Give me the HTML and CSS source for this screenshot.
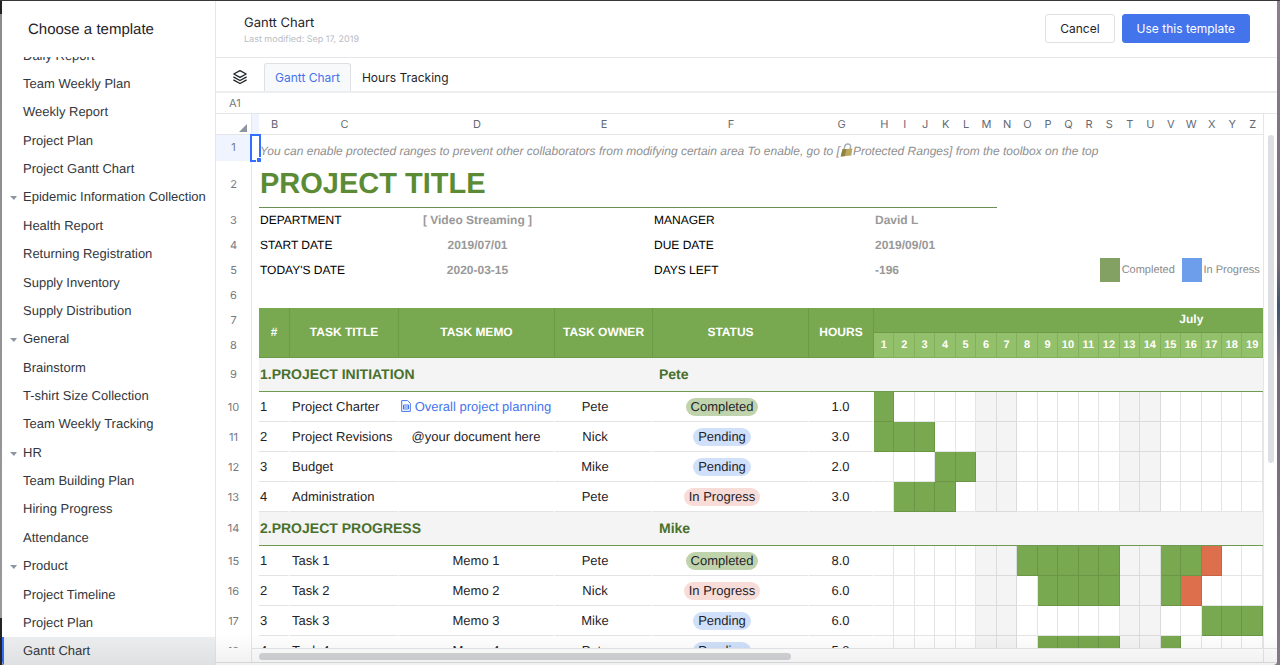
FILE: index.html
```
<!DOCTYPE html>
<html lang="en">
<head>
    <meta charset="UTF-8">
    <meta name="viewport" content="width=device-width, initial-scale=1.0">
    <title>Choose a template</title>
    <link rel="stylesheet" href="styles.css">
</head>
<body>
    <div class="modal">
        <!-- Template list -->
        <aside class="sidebar">
            <h1 class="sidebar-title">Choose a template</h1>
            <nav class="list-window">
                <ul class="template-list">
                    <li><a href="#">Daily Report</a></li>
                    <li><a href="#">Team Weekly Plan</a></li>
                    <li><a href="#">Weekly Report</a></li>
                    <li><a href="#">Project Plan</a></li>
                    <li><a href="#">Project Gantt Chart</a></li>
                    <li><button type="button" class="group">Epidemic Information Collection</button></li>
                    <li><a href="#">Health Report</a></li>
                    <li><a href="#">Returning Registration</a></li>
                    <li><a href="#">Supply Inventory</a></li>
                    <li><a href="#">Supply Distribution</a></li>
                    <li><button type="button" class="group">General</button></li>
                    <li><a href="#">Brainstorm</a></li>
                    <li><a href="#">T-shirt Size Collection</a></li>
                    <li><a href="#">Team Weekly Tracking</a></li>
                    <li><button type="button" class="group">HR</button></li>
                    <li><a href="#">Team Building Plan</a></li>
                    <li><a href="#">Hiring Progress</a></li>
                    <li><a href="#">Attendance</a></li>
                    <li><button type="button" class="group">Product</button></li>
                    <li><a href="#">Project Timeline</a></li>
                    <li><a href="#">Project Plan</a></li>
                    <li><a href="#" class="selected">Gantt Chart</a></li>
                </ul>
            </nav>
        </aside>

        <!-- Preview -->
        <main class="preview">
            <header class="preview-header">
                <div>
                    <h2 class="doc-title">Gantt Chart</h2>
                    <p class="doc-date">Last modified: Sep 17, 2019</p>
                </div>
                <div class="actions">
                    <button type="button" class="btn">Cancel</button>
                    <button type="button" class="btn btn-primary">Use this template</button>
                </div>
            </header>

            <div class="tabs">
                <button type="button" class="layers" aria-label="All sheets">
                    <svg width="16" height="16" viewBox="0 0 16 16" fill="none" stroke="#1f2329" stroke-width="1.3" stroke-linejoin="round" stroke-linecap="round">
                        <path d="M8 1.6 14.2 5 8 8.4 1.8 5Z"/>
                        <path d="M1.8 8.1 8 11.5l6.2-3.4"/>
                        <path d="M1.8 11.1 8 14.5l6.2-3.4"/>
                    </svg>
                </button>
                <button type="button" class="tab active">Gantt Chart</button>
                <button type="button" class="tab">Hours Tracking</button>
            </div>

            <div class="cell-ref">A1</div>

            <div class="sheet-area">
                <div class="sheet-window">
                    <table class="sheet">
                        <colgroup>
                            <col class="w-head"><col class="w-a"><col class="w-b"><col class="w-c"><col class="w-d"><col class="w-e"><col class="w-f"><col class="w-g">
                            <col span="19">
                        </colgroup>
                        <thead>
                            <tr id="letters">
                                <th class="corner"><svg width="8" height="8" viewBox="0 0 8 8"><path d="M8 0V8H0Z" fill="#8f959e"/></svg></th>
                            </tr>
                        </thead>
                        <tbody id="rows">
                            <tr class="row-note">
                                <th class="num current">1</th>
                                <td class="cell-a"><span class="selection"></span></td>
                                <td colspan="25" class="note">You can enable protected ranges to prevent other collaborators from modifying certain area To enable, go to [<svg class="lock" width="13" height="14" viewBox="1 0 12 14"><path d="M4.5 6.5 5.2 3.6C5.8 1.3 7.2.8 8.7 1c1.7.2 2.7 1.6 2.3 3.4L10.5 6.5" fill="none" stroke="#a5afb8" stroke-width="1.5"/><path d="M3 6.2 12.9 5.6 11.8 12.6 1.2 13.6Z" fill="#b9a95c"/><path d="M3 6.2 7 5.9 5.2 13.2 1.2 13.6Z" fill="#8d8345"/></svg>Protected Ranges] from the toolbox on the top</td>
                            </tr>
                            <tr class="row-title">
                                <th class="num">2</th>
                                <td></td>
                                <td colspan="12" class="project-title">PROJECT TITLE</td>
                                <td colspan="13"></td>
                            </tr>
                            <tr>
                                <th class="num">3</th>
                                <td></td>
                                <td colspan="2" class="label">DEPARTMENT</td>
                                <td class="value center">[ Video Streaming ]</td>
                                <td></td>
                                <td colspan="2" class="label">MANAGER</td>
                                <td colspan="19" class="value">David L</td>
                            </tr>
                            <tr>
                                <th class="num">4</th>
                                <td></td>
                                <td colspan="2" class="label">START DATE</td>
                                <td class="value center">2019/07/01</td>
                                <td></td>
                                <td colspan="2" class="label">DUE DATE</td>
                                <td colspan="19" class="value">2019/09/01</td>
                            </tr>
                            <tr>
                                <th class="num">5</th>
                                <td></td>
                                <td colspan="2" class="label">TODAY'S DATE</td>
                                <td class="value center">2020-03-15</td>
                                <td></td>
                                <td colspan="2" class="label">DAYS LEFT</td>
                                <td colspan="11" class="value">-196</td>
                                <td class="swatch swatch-done"></td>
                                <td colspan="3" class="legend">Completed</td>
                                <td class="swatch swatch-progress"></td>
                                <td colspan="3" class="legend">In Progress</td>
                            </tr>
                            <tr>
                                <th class="num">6</th>
                                <td colspan="26"></td>
                            </tr>
                            <tr>
                                <th class="num">7</th>
                                <td></td>
                                <th rowspan="2" class="head">#</th>
                                <th rowspan="2" class="head">TASK TITLE</th>
                                <th rowspan="2" class="head">TASK MEMO</th>
                                <th rowspan="2" class="head">TASK OWNER</th>
                                <th rowspan="2" class="head">STATUS</th>
                                <th rowspan="2" class="head">HOURS</th>
                                <td colspan="12" class="month"></td>
                                <th colspan="7" class="month">July</th>
                            </tr>
                            <tr id="days">
                                <th class="num">8</th>
                                <td></td>
                            </tr>
                        </tbody>
                    </table>
                </div>
                <div class="v-scroll"><div class="v-thumb"></div></div>
                <div class="h-scroll"><div class="h-thumb"></div></div>
                <div class="scroll-corner"></div>
            </div>
        </main>
        <div class="fade"></div>
    </div>

    <script src="script.js"></script>
</body>
</html>
```

FILE: styles.css
```
* {
    box-sizing: border-box;
}
body {
    margin: 0;
    height: 100vh;
    padding: 1px 3px 0 2px;
    overflow: hidden;
    font-family: Inter, "Liberation Sans", sans-serif;
    font-size: 12px;
    text-rendering: geometricPrecision;
    color: #1f2329;
    background:
        linear-gradient(#39363c, #39363c) top / 100% 1px no-repeat,
        linear-gradient(#222 14px, #8b8b8d 14px, #9a9a9c 618px, #222 618px) left / 2px 100% no-repeat,
        linear-gradient(#8f7f8d, #75687a 40%, #3f5470 46%, #75687a 54%, #857888);
}
button {
    font: inherit;
    color: inherit;
    border: none;
    background: none;
    padding: 0;
    cursor: pointer;
}
h1, h2, p, ul {
    margin: 0;
    padding: 0;
    font-weight: normal;
}
.modal {
    position: relative;
    display: flex;
    height: 100%;
    overflow: hidden;
    background: #fff;
    border-radius: 0 0 4px 4px;
}

/* Sidebar */
.sidebar {
    display: flex;
    flex-direction: column;
    flex: 0 0 214px;
    min-width: 0;
    border-right: 1px solid #e4e6e9;
    font-family: "Liberation Sans", Arial, sans-serif;
    font-size: 13px;
}
.sidebar-title {
    flex: none;
    height: 56px;
    padding-left: 26px;
    font-size: 15px;
    line-height: 58px;
}
.list-window {
    flex: 1;
    min-height: 0;
    overflow: hidden;
}
.template-list {
    display: flex;
    flex-direction: column;
    height: calc(100% + 16px);
    margin-top: -16px;
    list-style: none;
}
.template-list li {
    display: flex;
    flex: 1;
}
.template-list a, .group {
    display: flex;
    align-items: center;
    width: 100%;
    padding-left: 21px;
    color: #33373d;
    text-decoration: none;
    white-space: nowrap;
}
.group {
    padding-left: 8px;
}
.group::before {
    content: "";
    margin: 3px 6px 0 0;
    border: solid transparent;
    border-width: 4px 3px 0 4px;
    border-top-color: #8f959e;
}
.template-list .selected {
    padding-left: 19px;
    border-left: 2px solid #3370ff;
    background: #eceef0;
}

/* Preview header */
.preview {
    display: flex;
    flex: 1;
    flex-direction: column;
    min-width: 0;
    padding-bottom: 2px;
}
.preview-header {
    display: flex;
    justify-content: space-between;
    align-items: flex-start;
    height: 57px;
    padding: 13px 27px 0 28px;
    border-bottom: 1px solid #e4e6e9;
}
.doc-title {
    font-size: 13px;
    line-height: 18px;
}
.doc-date {
    margin-top: 2px;
    font-size: 9px;
    line-height: 12px;
    color: #b9bdc3;
}
.actions {
    display: flex;
    gap: 7px;
}
.btn {
    height: 29px;
    padding: 0 14px;
    border: 1px solid #dee0e3;
    border-radius: 3px;
}
.btn-primary {
    border-color: #4474ec;
    background: #4474ec;
    color: #fff;
}

/* Sheet tabs */
.tabs {
    display: flex;
    align-items: flex-end;
    height: 35px;
    border-bottom: 2px solid #eceef0;
}
.layers {
    width: 48px;
    height: 28px;
}
.layers svg {
    display: block;
    margin: 0 auto;
}
.tab {
    height: 28px;
    padding: 0 10px;
    border: 1px solid transparent;
    border-bottom: none;
    border-radius: 3px 3px 0 0;
}
.tab.active {
    border-color: #dee0e3;
    background: #f8f9fa;
    color: #4474ec;
}
.cell-ref {
    height: 21px;
    padding-left: 13px;
    border-bottom: 1px solid #e4e6e9;
    font-size: 11px;
    line-height: 20px;
    color: #747981;
}

/* Sheet */
.sheet-area {
    display: grid;
    flex: 1;
    grid-template-columns: 1fr 14px;
    grid-template-rows: 1fr 14px;
    min-height: 0;
    border-bottom: 1px solid #e0e1e3;
}
.sheet-window {
    min-height: 0;
    overflow: hidden;
}
.v-scroll {
    padding: 21px 3px 0 4px;
    border-left: 1px solid #e4e6e9;
}
.v-thumb {
    height: 64%;
    border-radius: 4px;
    background: #dddfe3;
}
.h-scroll {
    margin-left: 35px;
    padding: 4px 0 0 7px;
    border-top: 1px solid #e4e6e9;
    border-left: 1px solid #e4e6e9;
}
.h-thumb {
    width: 53%;
    height: 7px;
    border-radius: 4px;
    background: #d3d5d8;
}
.scroll-corner {
    border-top: 1px solid #e4e6e9;
    border-left: 1px solid #e4e6e9;
}
.sheet {
    width: 100%;
    table-layout: fixed;
    border-collapse: separate;
    border-spacing: 0;
    font-family: "Liberation Sans", Arial, sans-serif;
    font-size: 13px;
    line-height: 18px;
}
.w-head { width: 36px; }
.w-a { width: 7px; }
.w-b { width: 31px; }
.w-c { width: 109px; }
.w-d { width: 156px; }
.w-e { width: 98px; }
.w-f { width: 156px; }
.w-g { width: 65px; }
.sheet th, .sheet td {
    height: 25px;
    padding: 0;
    white-space: nowrap;
    text-align: left;
}
.sheet thead th {
    height: 21px;
    border-bottom: 1px solid #e4e6e9;
    font: 11px Inter, sans-serif;
    text-align: center;
    color: #646a73;
}
.sheet thead .col-a {
    border-left: none;
    background: #f0f4ff;
}
.sheet .corner {
    border-right: 1px solid #e4e6e9;
    text-align: right;
    vertical-align: bottom;
}
.corner svg {
    display: block;
    margin: 0 4px 2px auto;
}
.sheet .num {
    padding-bottom: 2px;
    border-right: 1px solid #e4e6e9;
    font: 11px Inter, sans-serif;
    text-align: center;
    color: #747981;
}
.sheet .current {
    background: #f0f4ff;
}
.sheet .center {
    text-align: center;
}
.sheet .row-note > * {
    height: 26px;
}
.cell-a {
    position: relative;
}
.selection {
    position: absolute;
    inset: -1px -2px -1px -2px;
    border: 2px solid #3370ff;
}
.selection::after {
    content: "";
    position: absolute;
    right: -3px;
    bottom: -3px;
    width: 4px;
    height: 4px;
    border: 1px solid #fff;
    box-sizing: content-box;
    background: #3370ff;
}
.sheet .note {
    padding: 6px 0 0 1px;
    font-size: 12px;
    font-style: italic;
    line-height: 16px;
    color: #8f8f8f;
}
.lock {
    vertical-align: -2px;
}
.sheet .row-title > * {
    height: 47px;
}
.sheet .project-title {
    padding-left: 1px;
    border-bottom: 1px solid #6a8f54;
    font-size: 29px;
    font-weight: bold;
    line-height: 32px;
    color: #5b8b34;
}
.sheet .label, .sheet .value {
    padding: 0 0 2px 1px;
    font-size: 12px;
}
.sheet .label {
    color: #000;
}
.sheet .value {
    font-weight: bold;
    color: #999;
}
.swatch {
    border-left: 1px solid #fff;
    border-bottom: 1px solid #fff;
}
.swatch-done {
    background: #82a162;
}
.swatch-progress {
    background: #6d9eeb;
}
.sheet .legend {
    padding: 0 0 2px 2px;
    font-size: 11px;
    color: #8a8a8a;
}
.sheet .head {
    padding-bottom: 2px;
    border-right: 1px solid #6b9c45;
    border-bottom: 1px solid #6b9c45;
    background: #78a84f;
    font-size: 12px;
    text-align: center;
    color: #fff;
}
.sheet .month {
    padding-bottom: 2px;
    border-bottom: 1px solid #6b9c45;
    background: #78a84f;
    font-size: 12px;
    text-align: center;
    color: #fff;
}
.sheet .date {
    border-right: 1px solid #83b05b;
    border-bottom: 1px solid #83b05b;
    background: #93c16b;
    font-size: 11px;
    text-align: center;
    color: #fff;
}
.sheet .section > * {
    height: 34px;
}
.sheet .section td {
    padding-bottom: 2px;
    border-bottom: 1px solid #6f9a51;
    background: #f4f4f4;
    font-size: 14px;
    font-weight: bold;
    color: #49702c;
}
.sheet .section .cell-a {
    border: none;
    background: none;
}
.sheet .section .name {
    padding-left: 1px;
}
.sheet .section .lead {
    padding-left: 6px;
}
.sheet .task > * {
    height: 30px;
}
.sheet .task .num {
    padding-bottom: 0;
}
.task .text {
    border-right: 2px solid #fff;
    border-bottom: 1px solid #e3e3e3;
}
.task .index {
    padding-left: 1px;
}
.task .title {
    padding-left: 2px;
}
.task .owner, .task .status {
    padding-right: 16px;
}
.doc-link {
    color: #4474ec;
    text-decoration: none;
}
.doc-link svg {
    margin-right: 4px;
    vertical-align: -1px;
}
.pill {
    display: inline-block;
    padding: 0 5px;
    border-radius: 9px;
}
.pill-completed {
    background: #bfd3ac;
}
.pill-pending {
    background: #d0e0fa;
}
.pill-in-progress {
    background: #f7dcd8;
}
.day {
    border-right: 1px solid rgba(0, 0, 0, 0.1);
    border-bottom: 1px solid rgba(0, 0, 0, 0.1);
}
.day.weekend {
    background: #f4f4f4;
}
.day.done {
    background: #78a84f;
}
.day.late {
    background: #dd6f4d;
}
.fade {
    position: absolute;
    right: 0;
    bottom: 0;
    left: 0;
    height: 32px;
    background: linear-gradient(transparent, rgba(0, 0, 0, 0.06));
    pointer-events: none;
}
```

FILE: script.js
```
const DAYS = 19;
const WEEKEND = [6, 7, 13, 14];

const docIcon = `<svg width="10" height="12" viewBox="0 0 10 12" fill="none" stroke="#4474ec"><path d="M.7.6H6.6L9.3 3.2V11.4H.7Z"/><path d="M2.5 5H7.5V9H2.5ZM2.5 7H7.5" /></svg>`;

const rows = [
    { section: "1.PROJECT INITIATION", lead: "Pete" },
    { title: "Project Charter", link: "Overall project planning", owner: "Pete", status: "Completed", hours: "1.0", done: [1] },
    { title: "Project Revisions", memo: "@your document here", owner: "Nick", status: "Pending", hours: "3.0", done: [1, 2, 3] },
    { title: "Budget", memo: "", owner: "Mike", status: "Pending", hours: "2.0", done: [4, 5] },
    { title: "Administration", memo: "", owner: "Pete", status: "In Progress", hours: "3.0", done: [2, 3, 4] },
    { section: "2.PROJECT PROGRESS", lead: "Mike" },
    { title: "Task 1", memo: "Memo 1", owner: "Pete", status: "Completed", hours: "8.0", done: [8, 9, 10, 11, 12, 15, 16], late: [17] },
    { title: "Task 2", memo: "Memo 2", owner: "Nick", status: "In Progress", hours: "6.0", done: [9, 10, 11, 12, 15], late: [16] },
    { title: "Task 3", memo: "Memo 3", owner: "Mike", status: "Pending", hours: "6.0", done: [17, 18, 19] },
    { title: "Task 4", memo: "Memo 4", owner: "Pete", status: "Pending", hours: "5.0", done: [9, 10, 11, 12, 15] }
];

// Column letters A to Z, column A is too narrow for its letter
let letters = '<th class="col-a"></th>';
for (const letter of "BCDEFGHIJKLMNOPQRSTUVWXYZ") {
    letters += `<th>${letter}</th>`;
}
document.getElementById("letters").insertAdjacentHTML("beforeend", letters);

// Dates under the month
let dates = "";
for (let day = 1; day <= DAYS; day++) {
    dates += `<th class="date">${day}</th>`;
}
document.getElementById("days").insertAdjacentHTML("beforeend", dates);

function dayCells(row) {
    let html = "";
    for (let day = 1; day <= DAYS; day++) {
        let state = "";
        if (WEEKEND.includes(day)) state = " weekend";
        if (row.done.includes(day)) state = " done";
        if (row.late && row.late.includes(day)) state = " late";
        html += `<td class="day${state}"></td>`;
    }
    return html;
}

let index = 0;
let html = "";
rows.forEach((row, i) => {
    const num = `<th class="num">${i + 9}</th><td class="cell-a"></td>`;
    if (row.section) {
        index = 0;
        html += `<tr class="section">${num}<td colspan="4" class="name">${row.section}</td><td colspan="21" class="lead">${row.lead}</td></tr>`;
        return;
    }
    index++;
    const memo = row.link ? `<a href="#" class="doc-link">${docIcon}${row.link}</a>` : row.memo;
    const pill = "pill-" + row.status.toLowerCase().replace(" ", "-");
    html += `<tr class="task">${num}
        <td class="text index">${index}</td>
        <td class="text title">${row.title}</td>
        <td class="text center">${memo}</td>
        <td class="text center owner">${row.owner}</td>
        <td class="text center status"><span class="pill ${pill}">${row.status}</span></td>
        <td class="text center">${row.hours}</td>
        ${dayCells(row)}</tr>`;
});
document.getElementById("rows").insertAdjacentHTML("beforeend", html);
```
